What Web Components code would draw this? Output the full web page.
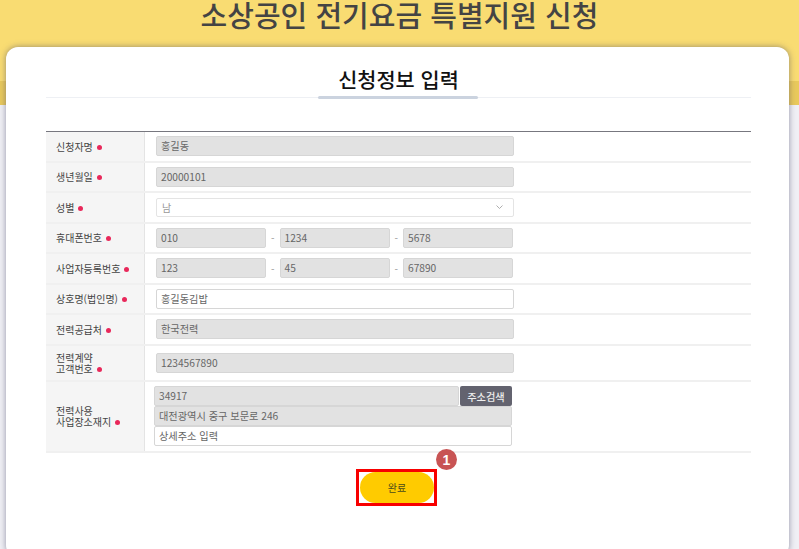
<!DOCTYPE html>
<html lang="ko">
<head>
<meta charset="utf-8">
<title>소상공인 전기요금 특별지원 신청</title>
<style>
  html, body { margin: 0; height: 100%; overflow: hidden; }
  body { font-family: "Noto Sans CJK KR", "Noto Sans", sans-serif; background: #f0f0f5; }
</style>
</head>
<body>

<apply-page>
  <span slot="title">소상공인 전기요금 특별지원 신청</span>
  <form-card heading="신청정보 입력">
    <form-row>신청자명<text-field slot="field" value="홍길동" disabled width="358"></text-field></form-row>
    <form-row>생년월일<text-field slot="field" value="20000101" disabled width="358"></text-field></form-row>
    <form-row>성별<select-field slot="field" value="남"></select-field></form-row>
    <form-row>휴대폰번호<triple-field slot="field" a="010" b="1234" c="5678"></triple-field></form-row>
    <form-row>사업자등록번호<triple-field slot="field" a="123" b="45" c="67890"></triple-field></form-row>
    <form-row>상호명(법인명)<text-field slot="field" value="홍길동김밥" width="358"></text-field></form-row>
    <form-row>전력공급처<text-field slot="field" value="한국전력" disabled width="358"></text-field></form-row>
    <form-row height="34">전력계약<br>고객번호<text-field slot="field" value="1234567890" disabled width="358"></text-field></form-row>
    <form-row height="69.5" tight>전력사용<br>사업장소재지<address-field slot="field"></address-field></form-row>
  </form-card>
</apply-page>

<script>
class ApplyPage extends HTMLElement {
  constructor() {
    super();
    this.attachShadow({ mode: "open" }).innerHTML = `
      <style>
        :host { display: block; height: 549px; overflow: hidden; }
        .hero {
          height: 105px;
          background: linear-gradient(#f9dc72 0 81px, #e9c95c 81px 105px);
          text-align: center;
          color: #444;
          font-size: 29px;
          font-weight: 500;
          line-height: 28px;
        }
        .hero h1 { margin: 0; font: inherit; }
        .wrap { margin: -58px 10px 0 6px; }
      </style>
      <div class="hero"><h1><slot name="title"></slot></h1></div>
      <div class="wrap"><slot></slot></div>`;
  }
}

class FormCard extends HTMLElement {
  constructor() {
    super();
    this.attachShadow({ mode: "open" }).innerHTML = `
      <style>
        :host {
          display: block;
          height: 510px;
          box-sizing: border-box;
          padding: 0 38px 0 40px;
          background: #fff;
          border-radius: 12px;
          box-shadow: 0 0 6px rgba(70, 70, 100, .55);
        }
        .head {
          height: 51px;
          box-sizing: border-box;
          padding-top: 17px;
          border-bottom: 1px solid #eef0f4;
          text-align: center;
          position: relative;
        }
        .head h2 { margin: 0; font-size: 20.8px; font-weight: 500; line-height: 30px; color: #111; }
        .head i {
          position: absolute; left: 272px; bottom: -2px;
          width: 160px; height: 3px; border-radius: 2px; background: #cbd3df;
        }
        .rows { margin-top: 33px; border-top: 1px solid #77777f; }
        .done { position: relative; display: flex; justify-content: center; margin-top: 16px; padding-right: 4px; }
        .outline { border: 3px solid #f80000; padding: 0 0 0 1px; }
        button {
          display: block; width: 74px; height: 31px; border: 0; border-radius: 16px;
          background: #ffcb00; color: #4a4a1c; font: inherit; font-size: 10px; padding: 0;
        }
        .badge {
          position: absolute; left: 390px; top: -20px;
          width: 21px; height: 21px; border-radius: 50%;
          background: #c85454; color: #fff;
          display: flex; align-items: center; justify-content: center;
          font-size: 14px; font-weight: 700; font-family: "Liberation Sans", sans-serif;
        }
      </style>
      <div class="head"><h2 id="h"></h2><i></i></div>
      <div class="rows"><slot></slot></div>
      <div class="done">
        <span class="outline"><button type="button">완료</button></span>
        <span class="badge">1</span>
      </div>`;
  }
  connectedCallback() {
    this.shadowRoot.getElementById("h").textContent = this.getAttribute("heading");
  }
}

class FormRow extends HTMLElement {
  constructor() {
    super();
    this.attachShadow({ mode: "open" }).innerHTML = `
      <style>
        :host {
          display: grid;
          grid-template-columns: 99px 1fr;
          border-bottom: 2px solid #f0f0f0;
          font-size: 10px;
          color: #444;
          --row-h: 28.5px;
        }
        .label {
          display: flex; align-items: center;
          min-height: var(--row-h);
          background: #f5f5f5;
          border-right: 1px solid #e4e4e4;
          box-sizing: border-box;
          padding: 0 6px 0 10px;
          line-height: 11px;
        }
        .star {
          display: inline-block; width: 5px; height: 5px; border-radius: 50%;
          background: #e8285a; margin-left: 4px; vertical-align: 1px;
        }
        .field { display: flex; align-items: center; padding-left: 11px; }
        :host([tight]) .field { padding-left: 9px; }
      </style>
      <div class="label"><span><slot></slot><span class="star"></span></span></div>
      <div class="field"><slot name="field"></slot></div>`;
  }
  connectedCallback() {
    const h = this.getAttribute("height");
    if (h) this.style.setProperty("--row-h", h + "px");
  }
}

class TextField extends HTMLElement {
  static get observedAttributes() { return ["value"]; }
  constructor() {
    super();
    this.attachShadow({ mode: "open" }).innerHTML = `
      <style>
        :host { display: block; }
        div {
          box-sizing: border-box; height: 20px; line-height: 18px;
          border: 1px solid #d6d6d6; border-radius: 2px;
          padding: 0 4px; background: #fff; color: #666; font-size: 10.2px;
          font-family: inherit; white-space: nowrap; overflow: hidden;
        }
        :host([disabled]) div { background: #e2e2e2; }
      </style>
      <div id="v"></div>`;
  }
  attributeChangedCallback(name, old, val) {
    this.shadowRoot.getElementById("v").textContent = val || "";
  }
  connectedCallback() {
    const w = this.getAttribute("width");
    if (w) this.style.width = w + "px";
  }
}

class SelectField extends HTMLElement {
  constructor() {
    super();
    this.attachShadow({ mode: "open" }).innerHTML = `
      <style>
        :host { display: block; width: 358px; }
        div {
          box-sizing: border-box; height: 19px; line-height: 17px;
          border: 1px solid #e4e4e4; border-radius: 2px; padding: 0 5px;
          display: flex; justify-content: space-between; align-items: center;
          color: #999; font-size: 10px; background: #fff;
        }
        svg { margin-right: 5px; }
      </style>
      <div><span id="v"></span>
        <svg width="7" height="4" viewBox="0 0 7 4" fill="none" stroke="#999" stroke-width=".8"><path d="M.5.5 3.5 3.5 6.5.5"/></svg>
      </div>`;
  }
  connectedCallback() {
    this.shadowRoot.getElementById("v").textContent = this.getAttribute("value");
  }
}

class TripleField extends HTMLElement {
  constructor() {
    super();
    this.attachShadow({ mode: "open" }).innerHTML = `
      <style>
        :host {
          display: grid; grid-template-columns: 110px 1fr 110px 1fr 110px;
          width: 357px; align-items: center; color: #999; font-size: 10px; text-align: center;
        }
        text-field { text-align: left; }
      </style>
      <text-field id="a" disabled></text-field><span>-</span>
      <text-field id="b" disabled></text-field><span>-</span>
      <text-field id="c" disabled></text-field>`;
  }
  connectedCallback() {
    for (const k of ["a", "b", "c"]) {
      this.shadowRoot.getElementById(k).setAttribute("value", this.getAttribute(k));
    }
  }
}

class AddressField extends HTMLElement {
  constructor() {
    super();
    this.attachShadow({ mode: "open" }).innerHTML = `
      <style>
        :host { display: flex; flex-direction: column; gap: 0; width: 358px; }
        .zip { display: flex; gap: 1px; align-items: stretch; }
        .zip text-field { flex: 1; }
        button {
          width: 52px; height: 20px; border: 0; border-radius: 2px; padding: 0;
          background: #63636f; color: #eee; font: inherit; font-size: 10.2px; font-weight: 500;
        }
      </style>
      <div class="zip"><text-field value="34917" disabled></text-field><button type="button">주소검색</button></div>
      <text-field value="대전광역시 중구 보문로 246" disabled></text-field>
      <text-field value="상세주소 입력"></text-field>`;
  }
}

customElements.define("text-field", TextField);
customElements.define("select-field", SelectField);
customElements.define("triple-field", TripleField);
customElements.define("address-field", AddressField);
customElements.define("form-row", FormRow);
customElements.define("form-card", FormCard);
customElements.define("apply-page", ApplyPage);
</script>
</body>
</html>
